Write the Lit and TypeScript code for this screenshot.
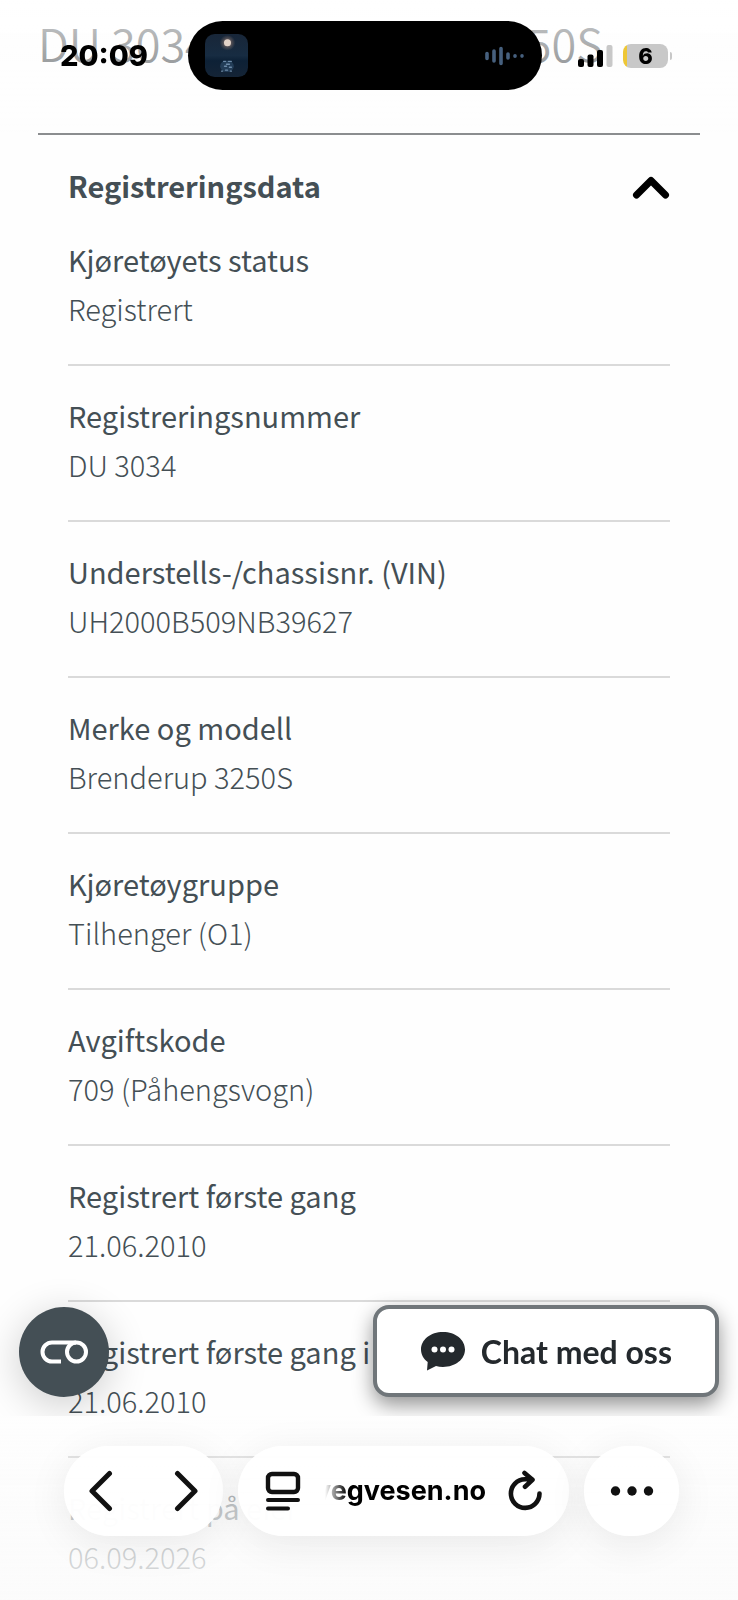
import { LitElement, html, css } from "lit";
import { customElement, property, state } from "lit/decorators.js";

interface Field {
  label: string;
  value: string;
}

const FIELDS: Field[] = [
  { label: "Kjøretøyets status", value: "Registrert" },
  { label: "Registreringsnummer", value: "DU 3034" },
  { label: "Understells-/chassisnr. (VIN)", value: "UH2000B509NB39627" },
  { label: "Merke og modell", value: "Brenderup 3250S" },
  { label: "Kjøretøygruppe", value: "Tilhenger (O1)" },
  { label: "Avgiftskode", value: "709 (Påhengsvogn)" },
  { label: "Registrert første gang", value: "21.06.2010" },
  { label: "Registrert første gang i Norge", value: "21.06.2010" },
  { label: "Registrert på eier", value: "06.09.2026" },
];

@customElement("phone-status")
class PhoneStatus extends LitElement {
  @property() time = "";
  @property() battery = "";

  static styles = css`
    :host {
      position: fixed;
      inset: 0 0 auto 0;
      z-index: 3;
      display: block;
      padding: 21px 66px 42px 60px;
      background: linear-gradient(rgba(255, 255, 255, 0.7), rgba(255, 255, 255, 0.3) 50%, rgba(255, 255, 255, 0));
      font-family: Inter, "Liberation Sans", sans-serif;
      color: #000;
    }
    .bar {
      display: grid;
      grid-template-columns: 128px 354px 1fr;
      align-items: center;
    }
    .time {
      font-size: 29px;
      line-height: 40px;
      font-weight: 800;
    }
    .island {
      display: flex;
      align-items: center;
      justify-content: space-between;
      height: 69px;
      box-sizing: border-box;
      padding: 0 18px 0 17px;
      border-radius: 35px;
      background: #000;
    }
    .right {
      display: flex;
      align-items: center;
      justify-content: flex-end;
      gap: 10px;
    }
    .battery {
      display: flex;
      align-items: center;
      gap: 2px;
    }
    .cell {
      width: 45px;
      height: 24px;
      border-radius: 8px;
      background: linear-gradient(90deg, #eec736 4px, #c8c8c8 4px);
      font-size: 22px;
      line-height: 24px;
      font-weight: 800;
      text-align: center;
    }
    .nub {
      width: 2px;
      height: 8px;
      border-radius: 0 4px 4px 0;
      background: #c8c8c8;
    }
    svg {
      display: block;
    }
  `;

  render() {
    return html`
      <div class="bar">
        <span class="time">${this.time}</span>
        <div class="island">
          <svg width="43" height="43" viewBox="0 0 44 44" aria-hidden="true">
            <defs>
              <linearGradient id="night" x1="0" y1="0" x2="0" y2="1">
                <stop offset="0" stop-color="#182638" />
                <stop offset="0.5" stop-color="#172c42" />
                <stop offset="0.62" stop-color="#0d2136" />
                <stop offset="1" stop-color="#152436" />
              </linearGradient>
              <radialGradient id="glow">
                <stop offset="0" stop-color="#b08d7c" stop-opacity="0.8" />
                <stop offset="1" stop-color="#b08d7c" stop-opacity="0" />
              </radialGradient>
            </defs>
            <rect width="44" height="44" rx="10" fill="url(#night)" />
            <circle cx="23" cy="9" r="8" fill="url(#glow)" />
            <circle cx="23" cy="9" r="3.600" fill="#e3d3c8" />
            <ellipse cx="22.500" cy="33" rx="7" ry="6" fill="#3c5f80" opacity="0.45" />
            <g fill="none" stroke="#7f9fbd" stroke-width="1.400" stroke-linecap="round" opacity="0.8">
              <path d="M19 28h2M24 28h3M22 31h3M20 33h2M25 34h2M21 37h2M17 38h1M26 38h1" />
            </g>
          </svg>
          <svg width="40" height="20" viewBox="0 0 40 20" aria-hidden="true">
            <g stroke="#46607e" stroke-width="3.600" stroke-linecap="round">
              <path d="M3 7.500v5M10 5v10M17 2.500v15M24 8v4M31 9.800v.4M38 9.900v.2" />
            </g>
          </svg>
        </div>
        <div class="right">
          <svg width="35" height="22" viewBox="0 0 35 22" role="img" aria-label="Signal">
            <rect x="0" y="14" width="6" height="8" rx="2" />
            <rect x="9.500" y="9.500" width="6" height="12.500" rx="2" />
            <rect x="19" y="5" width="6" height="17" rx="2" />
            <rect x="28.500" y="0" width="6" height="22" rx="2" fill="#c8c8c8" />
          </svg>
          <div class="battery">
            <div class="cell">${this.battery}</div>
            <div class="nub"></div>
          </div>
        </div>
      </div>
    `;
  }
}

@customElement("browser-bar")
class BrowserBar extends LitElement {
  @property() address = "";

  static styles = css`
    :host {
      position: fixed;
      inset: auto 0 0 0;
      z-index: 3;
      display: block;
      box-sizing: border-box;
      height: 184px;
      padding: 30px 59px 0 64px;
      background: linear-gradient(rgba(253, 253, 253, 0), rgba(252, 252, 252, 0.3) 25%, rgba(251, 251, 251, 0.7) 50%, rgba(251, 251, 251, 0.84));
      font-family: Inter, "Liberation Sans", sans-serif;
    }
    .bar {
      display: flex;
      gap: 15px;
      height: 90px;
    }
    .pill {
      display: flex;
      align-items: center;
      border-radius: 45px;
      background: rgba(255, 255, 255, 0.97);
      box-shadow: 0 8px 40px rgba(0, 0, 0, 0.08);
    }
    .nav {
      justify-content: space-between;
      width: 159px;
      box-sizing: border-box;
      padding: 0 24px;
    }
    .location {
      flex: 1;
      min-width: 0;
      gap: 22px;
      padding: 0 27px;
    }
    .more {
      justify-content: center;
      width: 95px;
    }
    .address {
      flex: 1;
      min-width: 0;
      display: flex;
      justify-content: flex-end;
      overflow: hidden;
      color: #000;
      font-size: 27px;
      line-height: 40px;
      font-weight: 700;
      text-decoration: none;
      white-space: nowrap;
      mask-image: linear-gradient(90deg, transparent 2px, #000 24px);
    }
    button {
      display: flex;
      align-items: center;
      margin: 0;
      padding: 0;
      border: 0;
      background: none;
      color: #111;
      cursor: pointer;
    }
    button.pill {
      background: rgba(255, 255, 255, 0.97);
    }
    svg {
      display: block;
      fill: none;
      stroke: currentColor;
      stroke-linecap: round;
      stroke-linejoin: round;
    }
  `;

  render() {
    return html`
      <nav class="bar" aria-label="Nettleser">
        <div class="pill nav">
          <button aria-label="Tilbake">
            <svg width="26" height="42" viewBox="0 0 26 42" stroke-width="5">
              <path d="M21.500 3.500 4 21l17.500 17.500" />
            </svg>
          </button>
          <button aria-label="Frem">
            <svg width="26" height="42" viewBox="0 0 26 42" stroke-width="5">
              <path d="M4.500 3.500 22 21 4.500 38.500" />
            </svg>
          </button>
        </div>
        <div class="pill location">
          <button aria-label="Sidemeny">
            <svg width="36" height="40" viewBox="0 0 36 40" stroke-width="4.400">
              <rect x="3" y="3" width="30" height="18" rx="4" />
              <path d="M3 29h30M3 37.500h20" stroke-width="4" />
            </svg>
          </button>
          <a class="address" href="#adresse">${this.address}</a>
          <button aria-label="Last inn på nytt">
            <svg width="34" height="42" viewBox="0 0 34 42" stroke-width="4.600">
              <path d="M31.500 23.500A14.300 14.300 0 1 1 17 9.300h7M16.500 3l8 6.800-7.500 7" />
            </svg>
          </button>
        </div>
        <button class="pill more" aria-label="Mer">
          <svg width="44" height="12" viewBox="0 0 44 12">
            <g fill="#111" stroke="none">
              <circle cx="5.500" cy="6" r="4.700" />
              <circle cx="22" cy="6" r="4.700" />
              <circle cx="38.500" cy="6" r="4.700" />
            </g>
          </svg>
        </button>
      </nav>
    `;
  }
}

@customElement("app-root")
class AppRoot extends LitElement {
  @state() private open = true;

  static styles = css`
    :host {
      display: block;
      min-height: 100vh;
      background: #fefefe;
      color: #444f55;
      font-family: "Noto Sans CJK JP", "Noto Sans", sans-serif;
    }
    .page {
      padding: 11px 38px 0;
    }
    h1 {
      margin: 0 0 58px;
      color: #6c7073;
      font-size: 45px;
      line-height: 64px;
      font-weight: 350;
      white-space: nowrap;
    }
    .section {
      padding: 0 30px;
      border-top: 2px solid #8b8d8f;
    }
    h2 {
      margin: 0;
      font-size: 29px;
      line-height: 49px;
    }
    .toggle {
      display: flex;
      align-items: center;
      justify-content: space-between;
      width: 100%;
      margin: 0;
      padding: 26px 0 0;
      border: 0;
      background: none;
      color: inherit;
      font: inherit;
      font-weight: 700;
      text-align: left;
      cursor: pointer;
    }
    dl {
      margin: 0;
    }
    .row {
      padding: 25px 0 31px;
      border-bottom: 2px solid #dadada;
      font-size: 29px;
      line-height: 49px;
    }
    .row:last-child {
      padding-bottom: 0;
      border-bottom: 0;
    }
    dt {
      font-weight: 400;
    }
    dd {
      margin: 0;
      font-weight: 300;
    }
    .floating {
      position: fixed;
      inset: 0 0 184px 0;
      z-index: 2;
      display: flex;
      align-items: flex-end;
      justify-content: space-between;
      padding: 0 19px 19px;
      overflow: hidden;
      pointer-events: none;
    }
    .round,
    .chat {
      display: flex;
      align-items: center;
      justify-content: center;
      margin: 0;
      pointer-events: auto;
      cursor: pointer;
    }
    .round {
      width: 90px;
      height: 90px;
      padding: 0;
      border: 0;
      border-radius: 45px;
      background: #444f55;
      box-shadow: 0 8px 40px rgba(0, 0, 0, 0.2);
    }
    .chat {
      gap: 15px;
      height: 92px;
      padding: 0 43px;
      border: 4px solid #70767a;
      border-radius: 16px;
      background: #fff;
      color: #24292d;
      box-shadow: 0 8px 20px rgba(0, 0, 0, 0.42);
      font-family: Lato, "Noto Sans", sans-serif;
      font-size: 32px;
      font-weight: 700;
      white-space: nowrap;
    }
    svg {
      display: block;
    }
  `;

  private toggle() {
    this.open = !this.open;
  }

  render() {
    return html`
      <phone-status time="20:09" battery="6"></phone-status>
      <main class="page">
        <h1>DU 3034 - Brenderup 3250S</h1>
        <section class="section">
          <h2>
            <button class="toggle" aria-expanded=${this.open ? "true" : "false"} @click=${this.toggle}>
              <span>Registreringsdata</span>
              <svg width="38" height="26" viewBox="0 0 38 26" aria-hidden="true">
                <path d="${this.open ? "M4.500 22 19 7.500 33.500 22" : "M4.500 5 19 19.500 33.500 5"}" fill="none" stroke="#000" stroke-width="7" stroke-linecap="round" stroke-linejoin="round" />
              </svg>
            </button>
          </h2>
          ${this.open
            ? html`<dl>
                ${FIELDS.map(
                  (f) => html`<div class="row">
                    <dt>${f.label}</dt>
                    <dd>${f.value}</dd>
                  </div>`
                )}
              </dl>`
            : null}
        </section>
      </main>
      <div class="floating">
        <button class="round" aria-label="Informasjonskapsler">
          <svg width="48" height="26" viewBox="0 0 48 26" fill="none" stroke="#fff" stroke-width="4">
            <path d="M21 22.500h-9a9.500 9.500 0 0 1 0-19h24" />
            <circle cx="36.500" cy="13" r="9.500" />
          </svg>
        </button>
        <button class="chat">
          <svg width="46" height="40" viewBox="0 0 46 40" aria-hidden="true">
            <path d="M23 1C10.500 1 1 8.700 1 18.500c0 5 2.500 9.300 6.700 12.500L7 39.500l9-4.600c2.200.6 4.500 1 7 1 12.500 0 22-7.600 22-17.400S35.500 1 23 1z" fill="#24292d" />
            <g fill="#fff">
              <circle cx="14.500" cy="18.500" r="3" />
              <circle cx="23" cy="18.500" r="3" />
              <circle cx="31.500" cy="18.500" r="3" />
            </g>
          </svg>
          <span>Chat med oss</span>
        </button>
      </div>
      <browser-bar address="vegvesen.no"></browser-bar>
    `;
  }
}
